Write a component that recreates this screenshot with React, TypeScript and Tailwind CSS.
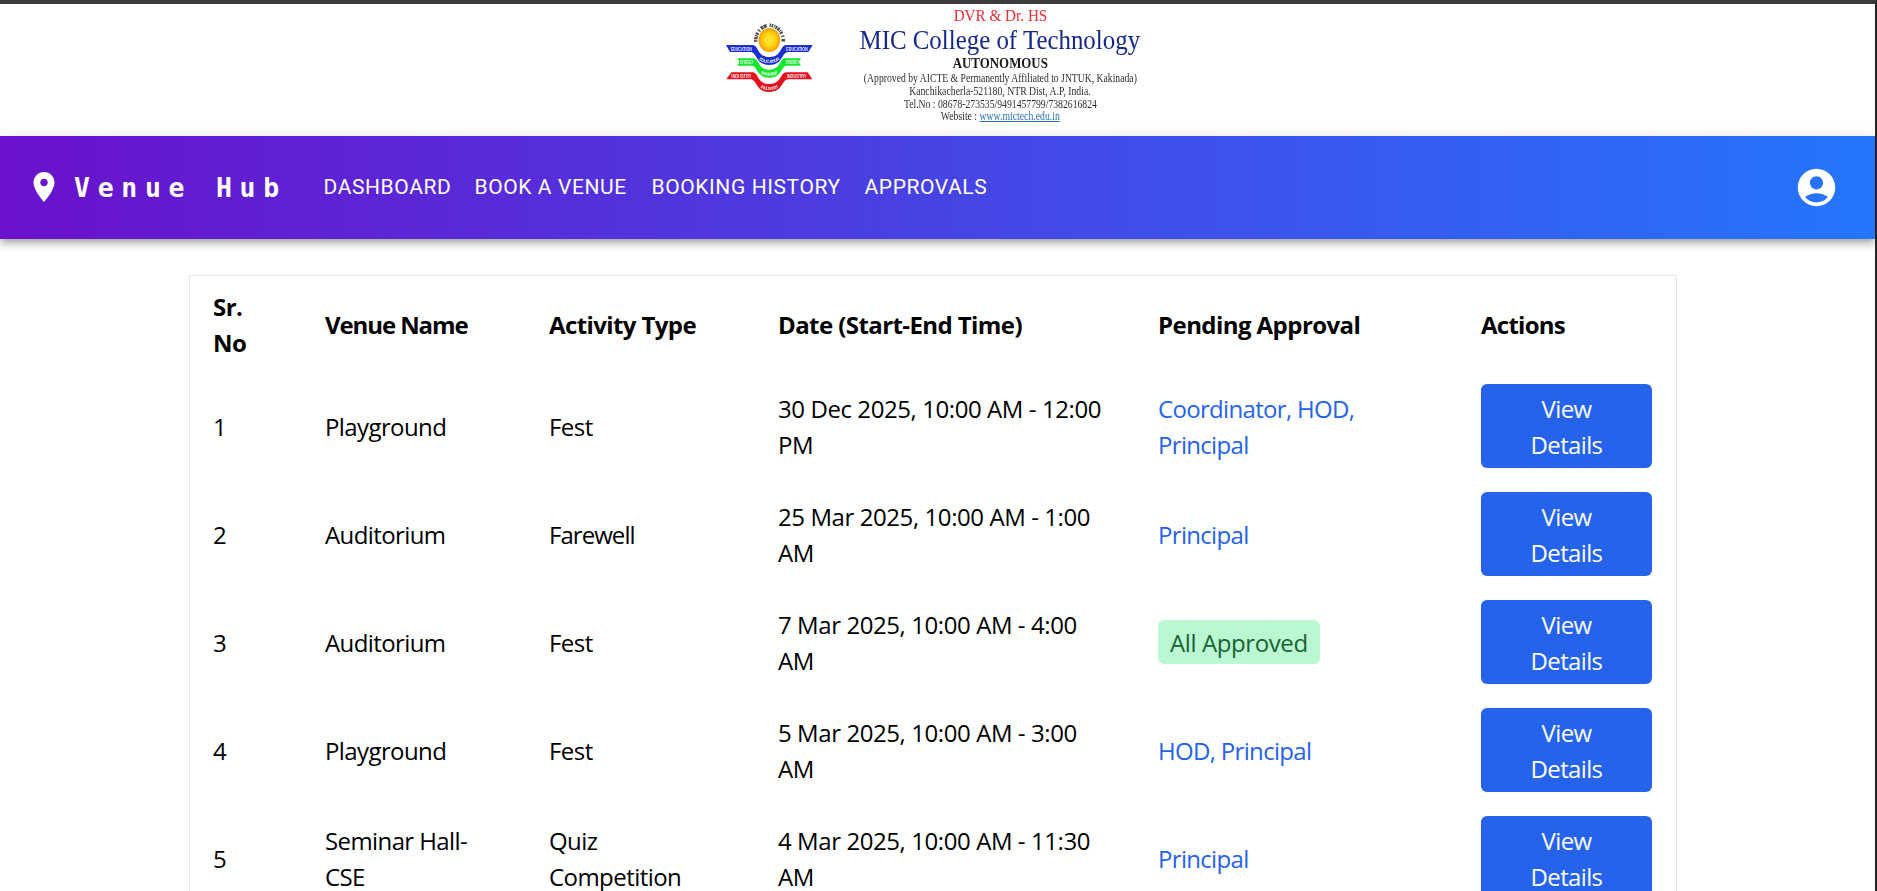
import type { ReactNode } from "react";

type Booking = {
  venue: string;
  activity: string;
  date: string;
  pending: string | null;
};

const bookings: Booking[] = [
  { venue: "Playground", activity: "Fest", date: "30 Dec 2025, 10:00 AM - 12:00\nPM", pending: "Coordinator, HOD,\nPrincipal" },
  { venue: "Auditorium", activity: "Farewell", date: "25 Mar 2025, 10:00 AM - 1:00\nAM", pending: "Principal" },
  { venue: "Auditorium", activity: "Fest", date: "7 Mar 2025, 10:00 AM - 4:00\nAM", pending: null },
  { venue: "Playground", activity: "Fest", date: "5 Mar 2025, 10:00 AM - 3:00\nAM", pending: "HOD, Principal" },
  { venue: "Seminar Hall-\nCSE", activity: "Quiz\nCompetition", date: "4 Mar 2025, 10:00 AM - 11:30\nAM", pending: "Principal" },
];

type RibbonProps = {
  id: string;
  d: string;
  curve: string;
  color: string;
  label: string;
  left: number;
  right: number;
  baseline: number;
  length: number;
};

function Ribbon({ id, d, curve, color, label, left, right, baseline, length }: RibbonProps) {
  return (
    <g>
      <path d={d} fill={color} />
      <path id={id} d={curve} fill="none" />
      <g fill="#fff" fillOpacity="0.9" fontFamily="Liberation Sans" fontWeight="700" fontSize="16">
        <text x={left} y={baseline} textLength={length} lengthAdjust="spacingAndGlyphs">{label}</text>
        <text x={right} y={baseline} textLength={length} lengthAdjust="spacingAndGlyphs">{label}</text>
        <text fontSize="13" letterSpacing="-1.1">
          <textPath href={"#" + id} startOffset="50%" textAnchor="middle">{label}</textPath>
        </text>
      </g>
    </g>
  );
}

function Crest() {
  return (
    <svg viewBox="0 12 360 318" className="h-[106px] w-[120px] shrink-0 blur-[0.4px]">
      <defs>
        <radialGradient id="sun">
          <stop offset="0" stopColor="#ffee3a" />
          <stop offset="0.6" stopColor="#ffcf10" />
          <stop offset="1" stopColor="#fb9a00" />
        </radialGradient>
      </defs>
      <path d="M137 125A41.500 49 0 0 1 220 125" fill="none" stroke="#222" strokeOpacity="0.8" strokeWidth="11" strokeDasharray="5 2 7 2 3 2 6 6 4 6 8 2 9 9 4 2 5 3 3 2" />
      <Ribbon
        id="edu"
        color="#1b2fd0"
        label="EDUCATION"
        left={62}
        right={229}
        baseline={152}
        length={64}
        d="M48 135H127C147 135 140 171 178 171C216 171 210 135 229 135H308L295 156H235C214 156 220 195 178 195C136 195 142 156 121 156H60Z"
        curve="M138 165C148 184 160 189 178 189C196 189 208 184 218 165"
      />
      <ellipse cx="178" cy="120" rx="35" ry="38" fill="#fff" />
      <ellipse cx="178" cy="120" rx="32.5" ry="36" fill="url(#sun)" />
      <Ribbon
        id="syn"
        color="#17e62e"
        label="SYNERGY"
        left={90}
        right={227}
        baseline={192}
        length={40}
        d="M82 175H132C146 175 144 209 178 209C212 209 210 175 224 175H273L266 186L273 197H230C214 197 216 233 178 233C140 233 142 197 126 197H82L88 186Z"
        curve="M140 206C150 222 160 227 178 227C196 227 206 222 216 206"
      />
      <Ribbon
        id="ind"
        color="#e2111d"
        label="INDUSTRY"
        left={64}
        right={230}
        baseline={234}
        length={60}
        d="M64 217H127C147 217 140 252 178 252C216 252 210 217 229 217H293L307 238H235C214 238 220 276 178 276C136 276 142 238 121 238H49Z"
        curve="M138 247C148 265 160 270 178 270C196 270 208 265 218 247"
      />
    </svg>
  );
}

function CollegeHeader() {
  return (
    <header className="flex h-[132px] w-[1875px] pl-[710px]">
      <Crest />
      <div className="ml-[10px] flex w-[320px] flex-col items-center font-['Liberation_Serif',serif] text-[12px] whitespace-nowrap text-[#2e2e33] blur-[0.3px]">
        <div className="mt-[3px] h-[18px] scale-x-[0.91] text-[16.7px] leading-[18px] text-[#ee2b35]">DVR &amp; Dr. HS</div>
        <div className="h-[30px] scale-x-[0.889] text-[28px] leading-[30px] text-[#14278b]">MIC College of Technology</div>
        <div className="h-[17px] scale-x-[0.86] text-[15px] leading-[17px] font-bold text-[#1a1a1a]">AUTONOMOUS</div>
        <div className="h-[13px] scale-x-[0.806] leading-[13px]">(Approved by AICTE &amp; Permanently Affiliated to JNTUK, Kakinada)</div>
        <div className="h-[13px] scale-x-[0.811] leading-[13px]">Kanchikacherla-521180, NTR Dist, A.P, India.</div>
        <div className="h-[13px] scale-x-[0.808] leading-[13px]">Tel.No : 08678-273535/9491457799/7382616824</div>
        <div className="h-[11px] scale-x-[0.812] leading-[11px]">
          Website : <span className="text-[#2b71b8] underline">www.mictech.edu.in</span>
        </div>
      </div>
    </header>
  );
}

function NavBar() {
  return (
    <nav className="flex h-[103px] w-[1875px] items-center bg-linear-to-r from-[#6a11cb] to-[#2575fc] pr-[36px] pl-[26px] text-white shadow-[0_3px_6px_-1.5px_rgba(0,0,0,0.2),0_6px_7.5px_0_rgba(0,0,0,0.14),0_1.5px_15px_0_rgba(0,0,0,0.12)] [--tw-gradient-position:to_right_in_srgb]">
      <svg viewBox="0 0 24 24" className="mb-[2px] size-[36px] fill-current">
        <path d="M12 2C8.13 2 5 5.13 5 9c0 5.25 7 13 7 13s7-7.75 7-13c0-3.87-3.13-7-7-7m0 9.5c-1.38 0-2.5-1.12-2.5-2.5s1.12-2.5 2.5-2.5 2.5 1.12 2.5 2.5-1.12 2.5-2.5 2.5" />
      </svg>
      <div className="ml-[12px] w-[249.5px] font-['DejaVu_Sans_Mono',monospace] text-[26.5px] font-bold tracking-[7.7px] whitespace-nowrap">Venue Hub</div>
      <div className="flex font-['Roboto',sans-serif] text-[21px] tracking-[0.6px] whitespace-nowrap">
        <a className="w-[151px]">DASHBOARD</a>
        <a className="w-[177px]">BOOK A VENUE</a>
        <a className="w-[213px]">BOOKING HISTORY</a>
        <a>APPROVALS</a>
      </div>
      <svg viewBox="0 0 24 24" className="ml-auto size-[45px] fill-current">
        <path d="M12 2C6.48 2 2 6.48 2 12s4.48 10 10 10 10-4.48 10-10S17.52 2 12 2m0 4c1.93 0 3.5 1.57 3.5 3.5S13.93 13 12 13s-3.5-1.57-3.5-3.5S10.07 6 12 6m0 14c-2.03 0-4.43-.82-6.14-2.88C7.55 15.8 9.68 15 12 15s4.45.8 6.14 2.12C16.43 19.18 14.03 20 12 20" />
      </svg>
    </nav>
  );
}

function Row({ children }: { children: ReactNode }) {
  return <div className="grid grid-cols-[111px_224px_229px_380px_323px_219px] items-center whitespace-pre-line *:px-[24px]">{children}</div>;
}

export default function App() {
  return (
    <div className="h-[891px] w-full overflow-hidden border-t-4 border-r-2 border-t-[#3b3b3b] border-r-[#232323] bg-white">
      <CollegeHeader />
      <NavBar />
      <main className="mt-[36px] ml-[189px] w-[1488px] border border-[#e5e7eb] font-['Open_Sans',sans-serif] text-[24px] leading-[36px] text-black">
        <Row>
          <div className="-ml-px pt-[13px] pb-[11px] font-bold tracking-[-0.5px]">Sr.{"\n"}No</div>
          <div className="pt-[2px] font-bold tracking-[-1.1px]">Venue Name</div>
          <div className="pt-[2px] font-bold tracking-[-0.6px]">Activity Type</div>
          <div className="pt-[2px] font-bold tracking-[-0.58px]">Date (Start-End Time)</div>
          <div className="pt-[2px] font-bold tracking-[-0.56px]">Pending Approval</div>
          <div className="pt-[2px] font-bold tracking-[-0.75px]">Actions</div>
        </Row>
        {bookings.map((b, i) => (
          <Row key={i}>
            <div className="-ml-px pt-px">{i + 1}</div>
            <div className="pt-px tracking-[-0.6px]">{b.venue}</div>
            <div className={b.activity === "Farewell" ? "pt-px tracking-[-0.95px]" : "pt-px tracking-[-0.55px]"}>{b.activity}</div>
            <div className="pt-px tracking-[-0.42px]">{b.date}</div>
            {b.pending ? (
              <div className="pt-px tracking-[-0.68px] text-[#2563eb]">{b.pending}</div>
            ) : (
              <div className="flex">
                <span className="rounded-[6px] bg-[#bbf7d0] px-[12px] pt-[4.5px] pb-[3.5px] tracking-[-0.4px] text-[#166534]">All Approved</span>
              </div>
            )}
            <div className="py-[12px]">
              <button className="block w-[171px] rounded-[6px] bg-[#2563eb] pt-[6.5px] pb-[5.5px] text-center tracking-[-0.65px] whitespace-pre-line text-white">{"View\nDetails"}</button>
            </div>
          </Row>
        ))}
      </main>
    </div>
  );
}
